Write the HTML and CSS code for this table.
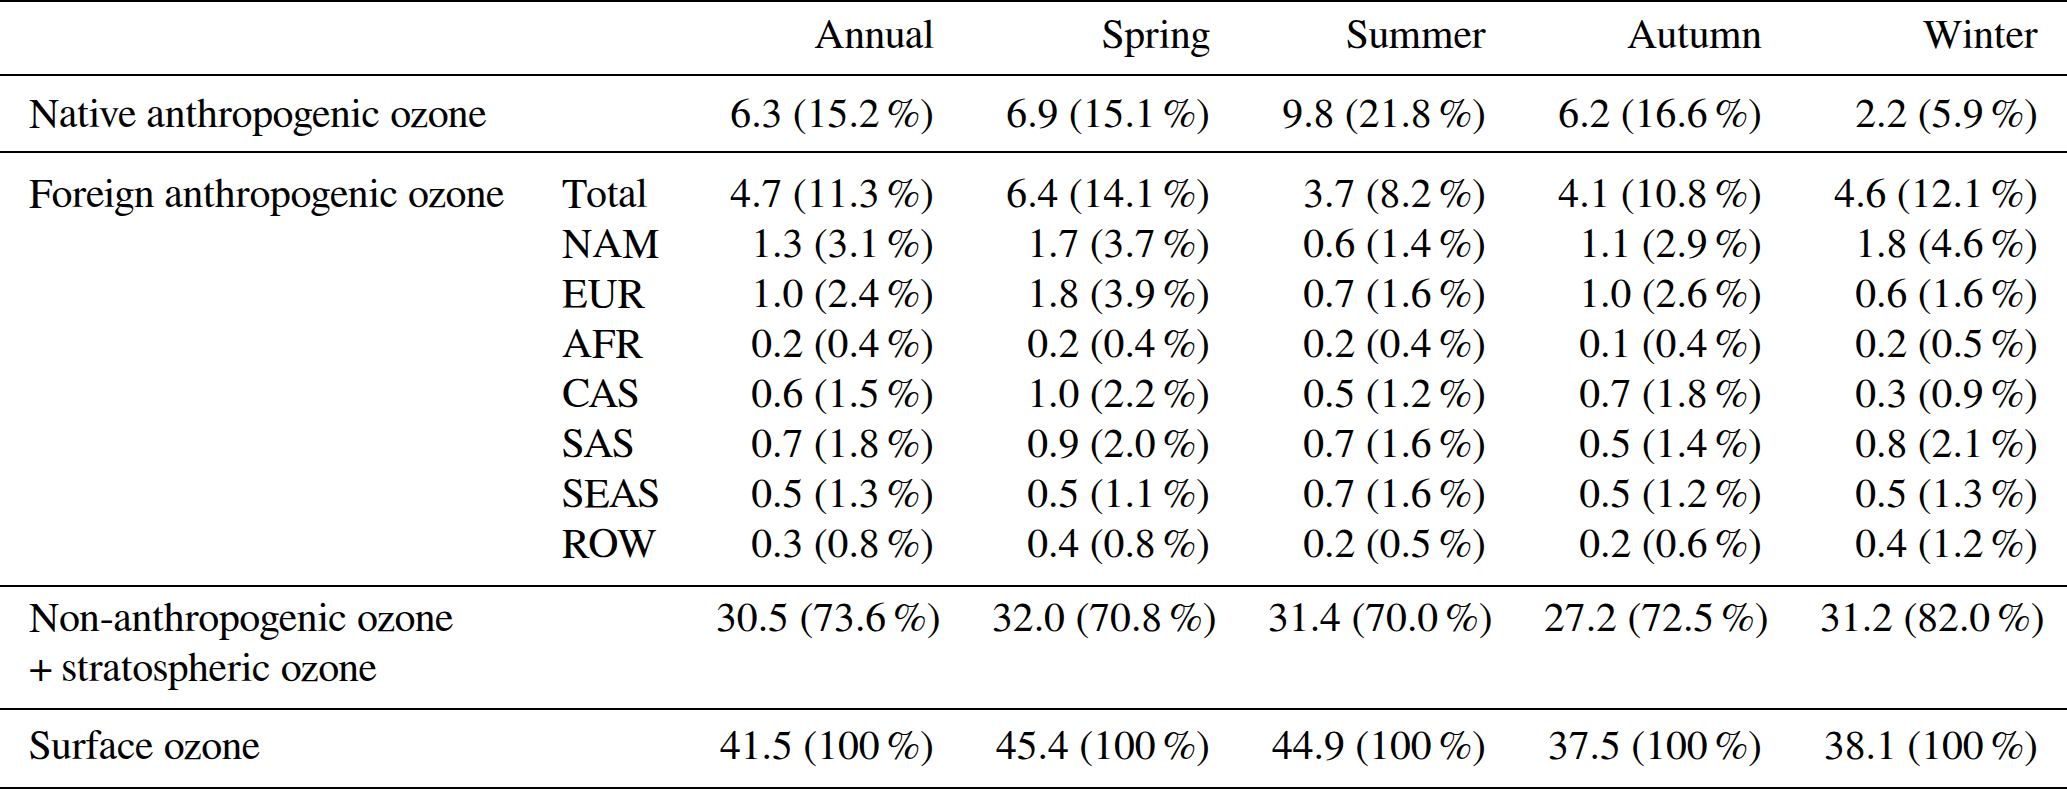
FILE: index.html
```html
<!DOCTYPE html>
<html lang="en">
<head>
<meta charset="utf-8">
<title>Ozone contributions</title>
<link rel="stylesheet" href="styles.css">
</head>
<body>
<table class="ozone">
  <colgroup>
    <col class="c-label">
    <col class="c-sub">
    <col class="c-val"><col class="c-val"><col class="c-val"><col class="c-val"><col class="c-val">
  </colgroup>
  <thead>
    <tr class="g-head">
      <th></th><th></th>
      <th>Annual</th><th>Spring</th><th>Summer</th><th>Autumn</th><th>Winter</th>
    </tr>
  </thead>
  <tbody>
    <tr class="g-native">
      <td>Native anthropogenic ozone</td><td></td>
      <td>6.3 (15.2<span class="ts"></span>%)</td><td>6.9 (15.1<span class="ts"></span>%)</td><td>9.8 (21.8<span class="ts"></span>%)</td><td>6.2 (16.6<span class="ts"></span>%)</td><td>2.2 (5.9<span class="ts"></span>%)</td>
    </tr>
  </tbody>
  <tbody class="g-foreign">
    <tr class="first">
      <td>Foreign anthropogenic ozone</td><td>Total</td>
      <td>4.7 (11.3<span class="ts"></span>%)</td><td>6.4 (14.1<span class="ts"></span>%)</td><td>3.7 (8.2<span class="ts"></span>%)</td><td>4.1 (10.8<span class="ts"></span>%)</td><td>4.6 (12.1<span class="ts"></span>%)</td>
    </tr>
    <tr>
      <td></td><td>NAM</td>
      <td>1.3 (3.1<span class="ts"></span>%)</td><td>1.7 (3.7<span class="ts"></span>%)</td><td>0.6 (1.4<span class="ts"></span>%)</td><td>1.1 (2.9<span class="ts"></span>%)</td><td>1.8 (4.6<span class="ts"></span>%)</td>
    </tr>
    <tr>
      <td></td><td>EUR</td>
      <td>1.0 (2.4<span class="ts"></span>%)</td><td>1.8 (3.9<span class="ts"></span>%)</td><td>0.7 (1.6<span class="ts"></span>%)</td><td>1.0 (2.6<span class="ts"></span>%)</td><td>0.6 (1.6<span class="ts"></span>%)</td>
    </tr>
    <tr>
      <td></td><td>AFR</td>
      <td>0.2 (0.4<span class="ts"></span>%)</td><td>0.2 (0.4<span class="ts"></span>%)</td><td>0.2 (0.4<span class="ts"></span>%)</td><td>0.1 (0.4<span class="ts"></span>%)</td><td>0.2 (0.5<span class="ts"></span>%)</td>
    </tr>
    <tr>
      <td></td><td>CAS</td>
      <td>0.6 (1.5<span class="ts"></span>%)</td><td>1.0 (2.2<span class="ts"></span>%)</td><td>0.5 (1.2<span class="ts"></span>%)</td><td>0.7 (1.8<span class="ts"></span>%)</td><td>0.3 (0.9<span class="ts"></span>%)</td>
    </tr>
    <tr>
      <td></td><td>SAS</td>
      <td>0.7 (1.8<span class="ts"></span>%)</td><td>0.9 (2.0<span class="ts"></span>%)</td><td>0.7 (1.6<span class="ts"></span>%)</td><td>0.5 (1.4<span class="ts"></span>%)</td><td>0.8 (2.1<span class="ts"></span>%)</td>
    </tr>
    <tr>
      <td></td><td>SEAS</td>
      <td>0.5 (1.3<span class="ts"></span>%)</td><td>0.5 (1.1<span class="ts"></span>%)</td><td>0.7 (1.6<span class="ts"></span>%)</td><td>0.5 (1.2<span class="ts"></span>%)</td><td>0.5 (1.3<span class="ts"></span>%)</td>
    </tr>
    <tr class="last">
      <td></td><td>ROW</td>
      <td>0.3 (0.8<span class="ts"></span>%)</td><td>0.4 (0.8<span class="ts"></span>%)</td><td>0.2 (0.5<span class="ts"></span>%)</td><td>0.2 (0.6<span class="ts"></span>%)</td><td>0.4 (1.2<span class="ts"></span>%)</td>
    </tr>
  </tbody>
  <tbody>
    <tr class="g-nonanthro">
      <td>Non-anthropogenic ozone<br>+<span class="ps"></span>stratospheric ozone</td><td></td>
      <td>30.5 (73.6<span class="ts"></span>%)</td><td>32.0 (70.8<span class="ts"></span>%)</td><td>31.4 (70.0<span class="ts"></span>%)</td><td>27.2 (72.5<span class="ts"></span>%)</td><td>31.2 (82.0<span class="ts"></span>%)</td>
    </tr>
  </tbody>
  <tbody>
    <tr class="g-surface">
      <td>Surface ozone</td><td></td>
      <td>41.5 (100<span class="ts"></span>%)</td><td>45.4 (100<span class="ts"></span>%)</td><td>44.9 (100<span class="ts"></span>%)</td><td>37.5 (100<span class="ts"></span>%)</td><td>38.1 (100<span class="ts"></span>%)</td>
    </tr>
  </tbody>
</table>
</body>
</html>
```

FILE: styles.css
```css
html, body {
  margin: 0;
  padding: 0;
  background: #fff;
  font-family: "FreeSerif", "Liberation Serif", serif;
}

.ozone {
  width: 2067px;
  table-layout: fixed;
  border-collapse: collapse;
  border-top: 2px solid #000;
  border-bottom: 2px solid #000;
  font-family: "FreeSerif", "Liberation Serif", serif;
  font-size: 41.7px;
  line-height: 49.7px;
  color: #000;
}

.c-label { width: 533px; }
.c-sub { width: 154px; }
.c-val { width: 276px; }

.ozone th,
.ozone td {
  padding: 0 29px;
  font-family: "FreeSerif", "Liberation Serif", serif;
  font-weight: normal;
  vertical-align: top;
  white-space: nowrap;
  text-align: right;
}

.ozone th:nth-child(1),
.ozone th:nth-child(2),
.ozone td:nth-child(1),
.ozone td:nth-child(2) {
  text-align: left;
}

.ts {
  display: inline-block;
  width: 0.17em;
}

.ps {
  display: inline-block;
  width: 0.22em;
}

.ozone tbody {
  border-top: 2px solid #000;
}

/* header */
.ozone .g-head > * {
  padding-top: 9px;
  padding-bottom: 13px;
}

/* native anthropogenic */
.ozone .g-native > * {
  padding-top: 14px;
  padding-bottom: 12px;
}

/* foreign anthropogenic block */
.ozone .g-foreign td {
  line-height: 49.9px;
}

.ozone .g-foreign .first > * {
  padding-top: 17px;
}

.ozone .g-foreign .last > * {
  padding-bottom: 15px;
}

/* non-anthropogenic */
.ozone .g-nonanthro > * {
  padding-top: 7.5px;
  padding-bottom: 13px;
}

.ozone .g-nonanthro td:first-child {
  line-height: 50px;
  padding-bottom: 13.7px;
}

/* surface */
.ozone .g-surface > * {
  padding-top: 12px;
  padding-bottom: 15px;
}
```
